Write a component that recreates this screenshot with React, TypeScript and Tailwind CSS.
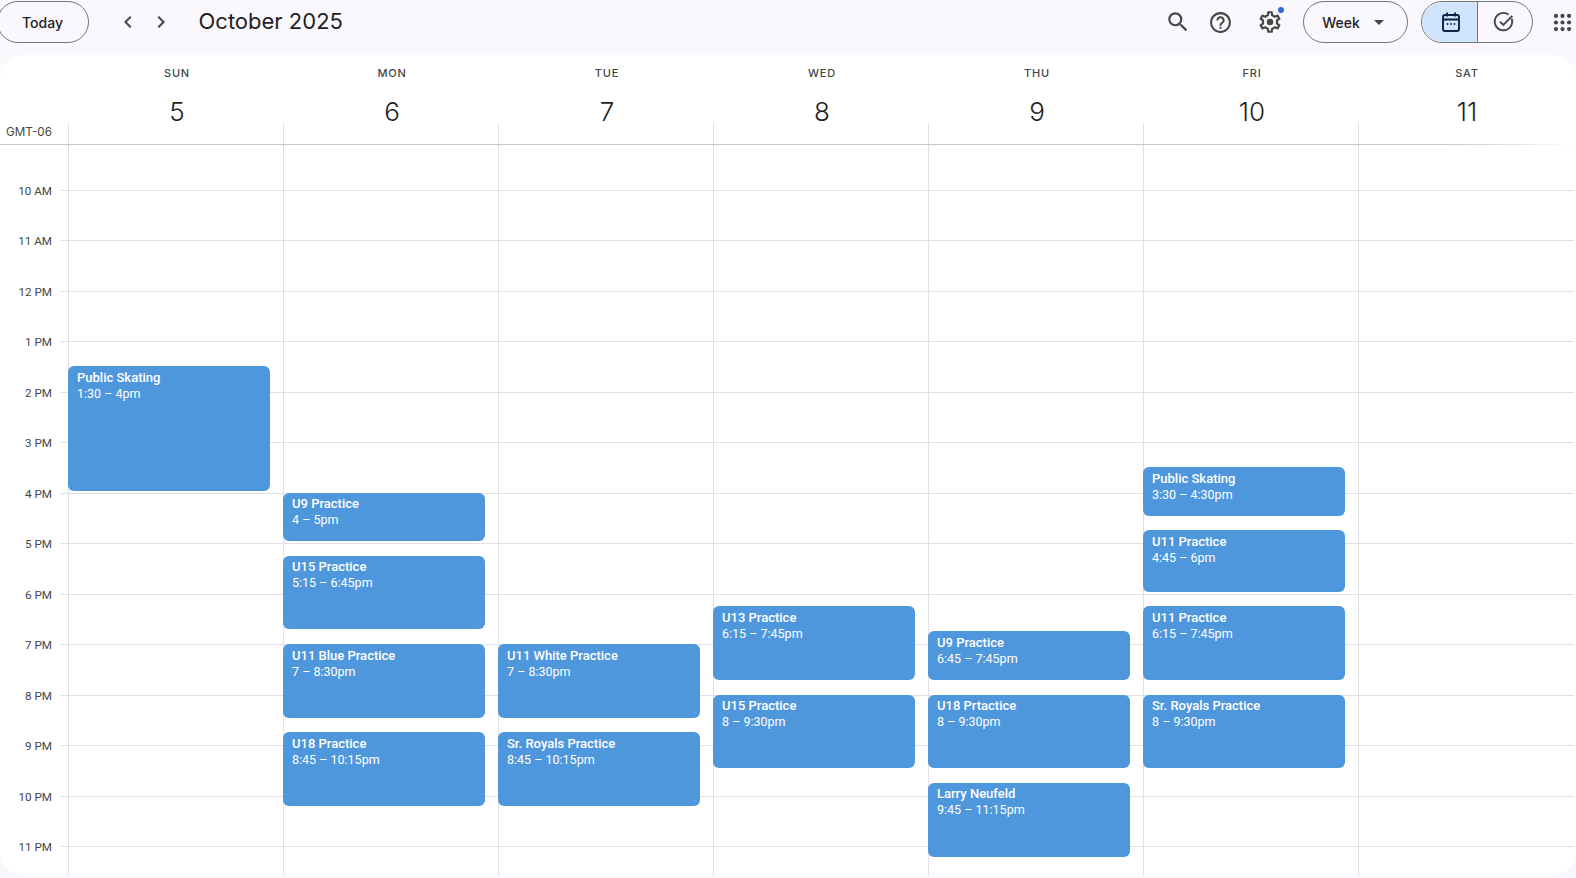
import { MdArrowDropDown, MdChevronLeft, MdChevronRight, MdHelpOutline, MdSearch } from "react-icons/md";

type CalEvent = {
  title: string;
  time: string;
  start: number;
  end: number;
};

type Day = {
  name: string;
  num: number;
  events: CalEvent[];
};

const HOUR = 50.5;

const days: Day[] = [
  {
    name: "SUN",
    num: 5,
    events: [{ title: "Public Skating", time: "1:30 – 4pm", start: 13.5, end: 16 }],
  },
  {
    name: "MON",
    num: 6,
    events: [
      { title: "U9 Practice", time: "4 – 5pm", start: 16, end: 17 },
      { title: "U15 Practice", time: "5:15 – 6:45pm", start: 17.25, end: 18.75 },
      { title: "U11 Blue Practice", time: "7 – 8:30pm", start: 19, end: 20.5 },
      { title: "U18 Practice", time: "8:45 – 10:15pm", start: 20.75, end: 22.25 },
    ],
  },
  {
    name: "TUE",
    num: 7,
    events: [
      { title: "U11 White Practice", time: "7 – 8:30pm", start: 19, end: 20.5 },
      { title: "Sr. Royals Practice", time: "8:45 – 10:15pm", start: 20.75, end: 22.25 },
    ],
  },
  {
    name: "WED",
    num: 8,
    events: [
      { title: "U13 Practice", time: "6:15 – 7:45pm", start: 18.25, end: 19.75 },
      { title: "U15 Practice", time: "8 – 9:30pm", start: 20, end: 21.5 },
    ],
  },
  {
    name: "THU",
    num: 9,
    events: [
      { title: "U9 Practice", time: "6:45 – 7:45pm", start: 18.75, end: 19.75 },
      { title: "U18 Prtactice", time: "8 – 9:30pm", start: 20, end: 21.5 },
      { title: "Larry Neufeld", time: "9:45 – 11:15pm", start: 21.75, end: 23.25 },
    ],
  },
  {
    name: "FRI",
    num: 10,
    events: [
      { title: "Public Skating", time: "3:30 – 4:30pm", start: 15.5, end: 16.5 },
      { title: "U11 Practice", time: "4:45 – 6pm", start: 16.75, end: 18 },
      { title: "U11 Practice", time: "6:15 – 7:45pm", start: 18.25, end: 19.75 },
      { title: "Sr. Royals Practice", time: "8 – 9:30pm", start: 20, end: 21.5 },
    ],
  },
  { name: "SAT", num: 11, events: [] },
];

const hours = [
  "9 AM", "10 AM", "11 AM", "12 PM", "1 PM", "2 PM", "3 PM", "4 PM",
  "5 PM", "6 PM", "7 PM", "8 PM", "9 PM", "10 PM", "11 PM",
];

function GearIcon() {
  return (
    <svg width="26" height="26" viewBox="0 0 24 24" fill="#444746">
      <path d="M19.43 12.98c.04-.32.07-.64.07-.98 0-.34-.03-.66-.07-.98l2.11-1.65c.19-.15.24-.42.12-.64l-2-3.46c-.09-.16-.26-.25-.44-.25-.06 0-.12.01-.17.03l-2.49 1c-.52-.4-1.08-.73-1.69-.98l-.38-2.65C14.46 2.18 14.25 2 14 2h-4c-.25 0-.46.18-.49.42l-.38 2.65c-.61.25-1.17.59-1.69.98l-2.49-1c-.06-.02-.12-.03-.18-.03-.17 0-.34.09-.43.25l-2 3.46c-.13.22-.07.49.12.64l2.11 1.65c-.04.32-.07.65-.07.98 0 .33.03.66.07.98l-2.11 1.65c-.19.15-.24.42-.12.64l2 3.46c.09.16.26.25.44.25.06 0 .12-.01.17-.03l2.49-1c.52.4 1.08.73 1.69.98l.38 2.65c.03.24.24.42.49.42h4c.25 0 .46-.18.49-.42l.38-2.65c.61-.25 1.17-.59 1.69-.98l2.49 1c.06.02.12.03.18.03.17 0 .34-.09.43-.25l2-3.46c.12-.22.07-.49-.12-.64l-2.11-1.65zm-1.98-1.71c.04.31.05.52.05.73 0 .21-.02.43-.05.73l-.14 1.13.89.7 1.08.84-.7 1.21-1.27-.51-1.04-.42-.9.68c-.43.32-.84.56-1.25.73l-1.06.43-.16 1.13-.2 1.35h-1.4l-.19-1.35-.16-1.13-1.06-.43c-.43-.18-.83-.41-1.23-.71l-.91-.7-1.06.43-1.27.51-.7-1.21 1.08-.84.89-.7-.14-1.13c-.03-.31-.05-.54-.05-.74s.02-.43.05-.73l.14-1.13-.89-.7-1.08-.84.7-1.21 1.27.51 1.04.42.9-.68c.43-.32.84-.56 1.25-.73l1.06-.43.16-1.13.2-1.35h1.39l.19 1.35.16 1.13 1.06.43c.43.18.83.41 1.23.71l.91.7 1.06-.43 1.27-.51.7 1.21-1.07.85-.89.7.14 1.13z" />
      <circle cx="12" cy="12" r="3" />
    </svg>
  );
}

function CalendarIcon() {
  return (
    <svg width="24" height="24" viewBox="0 0 24 24" fill="none" stroke="#0b2447" strokeWidth="1.9">
      <rect x="4" y="5" width="16" height="16" rx="2" />
      <path d="M4 9.5h16M8 2.5v4M16 2.5v4" />
      <circle cx="8.5" cy="14" r="0.9" fill="#0b2447" stroke="none" />
      <circle cx="12" cy="14" r="0.9" fill="#0b2447" stroke="none" />
      <circle cx="15.5" cy="14" r="0.9" fill="#0b2447" stroke="none" />
    </svg>
  );
}

function TaskIcon() {
  return (
    <svg width="24" height="24" viewBox="0 0 24 24" fill="none" stroke="#444746" strokeWidth="1.9">
      <path d="M19.6 8.6A8.7 8.7 0 1 1 16.6 4.6" />
      <path d="M8 11.6l3.3 3.3 9-9" />
    </svg>
  );
}

function AppsIcon() {
  return (
    <svg width="21" height="21" viewBox="0 0 24 24" fill="#444746">
      <circle cx="4.5" cy="4.5" r="2.4" />
      <circle cx="12" cy="4.5" r="2.4" />
      <circle cx="19.5" cy="4.5" r="2.4" />
      <circle cx="4.5" cy="12" r="2.4" />
      <circle cx="12" cy="12" r="2.4" />
      <circle cx="19.5" cy="12" r="2.4" />
      <circle cx="4.5" cy="19.5" r="2.4" />
      <circle cx="12" cy="19.5" r="2.4" />
      <circle cx="19.5" cy="19.5" r="2.4" />
    </svg>
  );
}

function Toolbar() {
  return (
    <div className="flex h-[55px] shrink-0 items-start pt-px text-[#1f1f1f]">
      <button className="-ml-[3.5px] h-[42px] w-[92px] rounded-full border border-[#747775] text-[14px] font-medium font-['Inter',sans-serif]">
        Today
      </button>
      <div className="ml-[27px] flex h-[42px] items-center gap-[9px] text-[#444746]">
        <MdChevronLeft size={24} />
        <MdChevronRight size={24} />
      </div>
      <h1 className="ml-[26px] h-[42px] text-[22px] leading-[41px] font-normal font-['Inter',sans-serif]">October 2025</h1>

      <div className="flex-1" />

      <div className="flex h-[42px] items-center text-[#444746]">
        <MdSearch size={26} />
        <div className="ml-[17px]">
          <MdHelpOutline size={25} />
        </div>
        <div className="relative ml-[24px]">
          <GearIcon />
          <span className="absolute -top-[2px] right-[-1px] h-[6px] w-[6px] rounded-full bg-[#3367d6]" />
        </div>
      </div>

      <button className="ml-[20px] flex h-[42px] w-[105px] items-center justify-center rounded-full border border-[#747775] pl-[2px] text-[14px] font-medium font-['Inter',sans-serif]">
        Week
        <MdArrowDropDown size={24} className="ml-[7px] text-[#444746]" />
      </button>

      <div className="ml-[13px] flex h-[42px] w-[112px] overflow-hidden rounded-full border border-[#747775]">
        <div className="flex w-[56px] items-center justify-center border-r border-[#747775] bg-[#d0e4fb] pl-[3px]">
          <CalendarIcon />
        </div>
        <div className="flex flex-1 items-center justify-center pr-[3px]">
          <TaskIcon />
        </div>
      </div>

      <div className="ml-[19px] mr-[3px] flex h-[42px] items-center">
        <AppsIcon />
      </div>
    </div>
  );
}

function EventCard({ ev }: { ev: CalEvent }) {
  return (
    <div
      className="absolute -left-px w-[202px] rounded-[6px] bg-[#4f97dd] pl-[9px] pt-[3.5px] text-[12.5px] leading-[16px] text-white font-['Roboto',sans-serif]"
      style={{ top: (ev.start - 9) * HOUR, height: (ev.end - ev.start) * HOUR - 2 }}
    >
      <div className="text-[13px] font-medium">{ev.title}</div>
      <div>{ev.time}</div>
    </div>
  );
}

export default function App() {
  return (
    <div className="flex h-[878px] w-[1576px] flex-col overflow-hidden bg-[#faf8fd] font-['Inter',sans-serif]">
      <Toolbar />

      <div className="mb-[3px] flex min-h-0 flex-1 flex-col overflow-hidden rounded-[24px] bg-white">
        <div className="flex h-[68px] shrink-0 pl-[68px]">
          {days.map((d) => (
            <div key={d.name} className="flex w-[215px] flex-col items-center pl-[3px] pt-[11px]">
              <div className="text-[11px] leading-[14px] font-medium tracking-[0.8px] text-[#444746]">{d.name}</div>
              <div className="mt-[21px] text-[26px] leading-[22px] font-[350] text-[#1f1f1f]">{d.num}</div>
            </div>
          ))}
        </div>

        <div className="flex h-[21px] shrink-0">
          <div className="w-[68px] pl-[6px] pt-[2px] text-[11.7px] leading-[14px] text-[#444746]">GMT-06</div>
          {days.map((d) => (
            <div key={d.name} className="w-[215px] border-l border-[#dfdfea]" />
          ))}
        </div>

        <div className="h-px shrink-0 bg-gradient-to-r from-[#c7c7cd] from-92% to-white" />

        <div className="min-h-0 flex-1 overflow-hidden">
          <div className="-mt-[6px] flex">
            <div className="w-[68px] shrink-0">
              {hours.map((h) => (
                <div key={h} className="relative h-[50.5px]">
                  <div className="absolute right-0 top-0 w-[8px] border-t border-[#dfdfea]" />
                  <div className="absolute right-[16px] top-[-6px] text-[11.7px] leading-[14px] whitespace-nowrap text-[#444746] font-['Roboto',sans-serif]">
                    {h}
                  </div>
                </div>
              ))}
            </div>
            {days.map((d) => (
              <div key={d.name} className="relative w-[215px] shrink-0 border-l border-[#dfdfea] last:w-[216px]">
                {hours.map((h) => (
                  <div key={h} className="box-border h-[50.5px] border-t border-[#dfdfea]" />
                ))}
                {d.events.map((ev) => (
                  <EventCard key={ev.title + ev.start} ev={ev} />
                ))}
              </div>
            ))}
          </div>
        </div>
      </div>
    </div>
  );
}
